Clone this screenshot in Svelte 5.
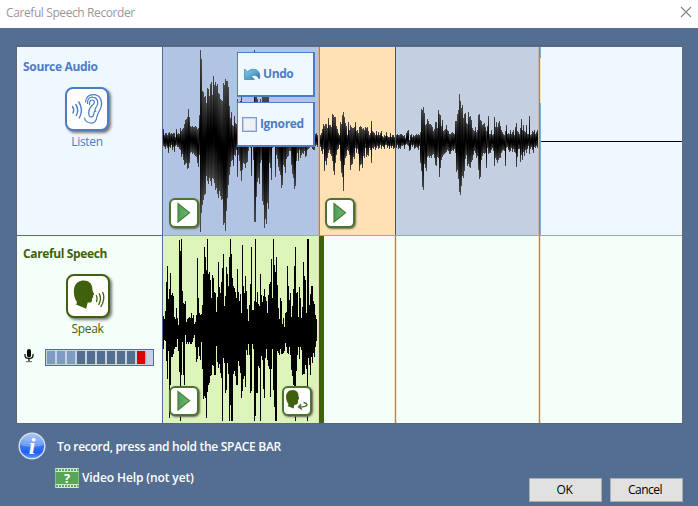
<script>
  // Peak values are stored in thirds of a pixel, one entry per pixel column.
  const blocks = [
    {
      x: 0, oyTop: -7, oyBottom: 88,
      top: [268,284,278,278,284,280,275,283,278,281,278,280,292,268,283,280,283,265,272,268,264,252,240,236,231,208,230,258,262,259,262,262,259,262,268,265,225,30,57,154,157,170,168,189,144,147,168,132,126,165,108,135,126,138,131,159,162,177,180,183,129,135,117,123,123,142,198,235,216,255,258,228,248,252,178,190,190,183,170,188,190,190,190,190,190,190,190,190,190,190,190,30,168,168,178,190,190,178,190,168,168,168,168,168,168,168,190,190,190,190,200,200,200,200,200,200,200,200,200,200,200,200,200,200,200,200,220,220,220,220,220,220,230,230,230,230,240,240,240,240,240,240,250,250,250,250,260,260,260,260,275,268,283,278,284,286],
      bottom: [33,36,42,33,39,54,36,39,30,45,36,51,33,30,36,36,42,45,66,57,75,90,87,84,102,100,84,54,51,57,54,60,63,66,84,96,60,290,234,210,195,180,177,124,138,147,130,138,152,130,132,144,165,159,177,189,167,183,195,192,270,265,288,228,190,150,120,96,78,75,93,60,63,45,125,60,78,108,137,105,84,87,100,84,80,48,36,40,122,30,75,260,262,186,140,129,146,84,75,198,210,280,252,267,204,222,84,100,135,40,36,36,125,60,72,96,108,120,160,150,90,96,114,72,66,63,48,48,90,117,129,162,152,78,54,78,45,69,60,54,57,48,66,63,45,42,40,36,36,42,45,45,33,30,36,30]
    },
    {
      x: 157, oyTop: 38, oyBottom: 38,
      top: [150,144,132,117,123,117,117,129,99,120,120,126,87,90,96,96,123,132,144,150,111,117,90,81,96,114,123,150,111,135,120,126,129,129,126,111,138,135,144,126,123,126,132,129,135,126,129,126,138,150,144,108,138,141,144,150,138,150,141,150,144,138,153,156,150,153,141,153,156,156,144,156,150,150,156,150],
      bottom: [186,198,207,192,258,228,240,219,204,195,207,213,228,258,270,234,210,195,192,180,228,264,276,318,240,219,213,195,198,210,255,240,237,216,222,189,204,192,207,258,240,237,249,213,219,189,216,210,213,189,195,234,189,192,186,195,189,183,192,189,180,192,183,186,192,180,180,189,183,192,183,189,183,192,189,180]
    },
    {
      x: 233, oyTop: 33, oyBottom: 33,
      top: [165,162,165,165,162,162,165,168,165,174,159,153,150,180,165,162,171,165,168,165,162,165,162,165,156,87,90,81,99,135,132,117,123,132,132,135,141,153,147,126,126,144,90,102,105,138,120,153,150,147,135,150,153,162,162,159,156,159,162,123,123,102,90,42,63,84,75,114,102,99,129,132,96,111,108,120,144,150,153,141,156,150,105,102,120,123,135,132,129,141,153,138,108,162,162,150,165,162,111,141,126,141,129,123,138,150,156,162,165,153,135,162,159,162,150,162,156,150,165,141,129,153,156,162,144,117,150,135,153,156,135,162,162,108,165,162,153,156,150,162,156,150,162],
      bottom: [204,195,207,204,207,198,198,195,207,195,192,195,198,213,210,195,201,195,207,204,201,204,210,198,249,273,321,330,252,264,273,231,228,234,228,234,225,222,234,255,258,231,234,291,264,240,231,225,222,219,216,210,213,222,222,213,210,213,207,219,276,270,297,336,345,318,288,294,273,237,225,258,252,261,264,246,240,225,213,219,234,228,270,297,291,240,228,219,222,219,264,204,222,219,219,210,204,213,258,234,240,249,240,234,234,219,213,210,213,258,204,201,210,216,213,204,216,207,216,219,261,231,207,207,246,225,240,216,228,210,219,207,198,222,207,201,210,219,201,204,198,204,207]
    }
  ];
  const speech = {
    x: 0, oyTop: -4, oyBottom: 89,
    top: [252,262,237,150,102,200,170,123,190,183,193,255,262,228,258,278,25,57,20,177,213,216,207,270,261,258,255,258,243,258,250,276,270,250,78,198,243,249,246,220,127,45,75,114,20,126,120,145,198,130,138,180,183,240,195,90,165,183,150,108,66,222,192,105,126,162,75,20,66,138,162,168,180,198,111,180,207,186,243,40,162,183,132,177,231,267,219,156,45,234,234,207,20,210,180,216,222,126,189,210,192,171,195,207,243,189,156,150,81,198,20,99,120,75,159,228,261,198,207,276,258,285,243,240,102,162,204,183,255,222,171,102,45,183,180,255,165,198,258,225,90,132,144,243,20,20,219,186,162,162,207,216,249,262,294],
    bottom: [72,45,48,108,162,78,278,180,95,96,87,72,66,66,42,78,141,288,150,51,150,180,30,57,51,57,51,57,57,51,39,30,66,111,102,66,93,105,51,132,222,213,219,278,201,180,174,153,150,120,123,150,150,63,111,129,117,144,159,288,99,114,204,195,114,147,288,240,288,288,147,138,153,180,180,108,123,144,219,198,162,153,186,75,90,57,90,204,198,57,72,288,273,204,204,123,129,288,93,105,192,219,99,72,105,123,132,216,132,72,195,246,288,288,78,84,90,72,87,87,84,78,54,66,84,87,66,90,135,153,180,189,288,138,90,66,102,66,75,150,147,147,120,132,288,99,120,150,96,114,84,96,66,48,15]
  };
  const toBars = (b) =>
    b.top.map((t, i) => {
      const y = Math.round(b.oyTop + t / 3);
      return { x: b.x + i, y, h: Math.round(b.oyBottom + b.bottom[i] / 3) - y };
    });
  const sourceBars = blocks.flatMap(toBars);
  const speechBars = toBars(speech);
  const meter = ['lo', 'lo', 'lo', 'mid', 'mid', 'mid', 'mid', 'mid', 'mid', 'peak'];
</script>

{#snippet play()}
  <svg width="30" height="30" viewBox="0 0 30 30">
    <path d="M9 5.5V24L20.5 14.8Z" fill="url(#leaf)" stroke="#47812f" stroke-width="1.2" />
  </svg>
{/snippet}

<div class="window">
  <header>
    <span class="title">Careful Speech Recorder</span>
    <svg class="close" width="12" height="12" viewBox="0 0 12 12"><path d="M1 1L11 11M11 1L1 11" stroke="#858585" stroke-width="1.1" /></svg>
  </header>
  <main>
    <div class="frame">
      <section class="row source">
        <div class="side">
          <h2>Source Audio</h2>
          <div class="tool">
            <button class="big" aria-label="Listen">
              <svg width="40" height="40" viewBox="0 0 40 40" fill="none" stroke="#4b7cc6" stroke-width="1.2" stroke-linecap="round">
                <path d="M5.5 17.5Q7.7 20.5 6 24M8.8 15.5Q12.2 20.5 9.3 26.5M11.8 13Q16.8 20.5 12.3 29" stroke-width="1.4" />
                <path d="M18.5 13C19 7.5 23 5.7 26.5 5.7C32.5 5.7 35.5 11 34.3 17C33.5 21.5 30.5 23.5 30 27.5C29.3 32 27.5 34.5 23.5 34C20.5 33.6 18 31.5 17.5 29" />
                <path d="M20.5 14.5C20 10 23 7.5 26 8.2C31 9 32 14 29.5 17.5C28.5 19 27.2 20.4 28.4 22.2C26 22 28 26 25.5 27.5C23 29 21.3 26.5 22 24.5M22.5 15.5C22 12 24 10.5 26 11.2C29 12.5 26.5 15.5 24.5 17C23 18.5 22 20 21.5 24" />
              </svg>
            </button>
            <span>Listen</span>
          </div>
        </div>
        <div class="track">
          <div class="seg s1"></div><div class="seg s2"></div><div class="seg s3"></div><div class="seg s4"></div>
          <svg class="wave" width="519" height="188" shape-rendering="crispEdges">
            <defs>
              <linearGradient id="ink" x2="0" y2="1">
                <stop offset="0" stop-color="#4a4a4a" /><stop offset=".22" stop-color="#222" /><stop offset=".45" stop-color="#000" />
                <stop offset=".58" stop-color="#000" /><stop offset=".8" stop-color="#222" /><stop offset="1" stop-color="#4a4a4a" />
              </linearGradient>
              <linearGradient id="leaf"><stop offset="0" stop-color="#4a9c56" /><stop offset="1" stop-color="#70b878" /></linearGradient>
            </defs>
            {#each sourceBars as b}
              <rect x={b.x} y={b.y} width="1" height={b.h} fill="url(#ink)" />
            {/each}
            <path d="M378 94.5H519" stroke="#000" />
            <path d="M155.5 0V188M375.5 0V188" stroke="#c8b5ac" />
            <path d="M156.500 0V188M376.500 0V188" stroke="#dc780f" />
            <path d="M232.500 0V188" stroke="#108010" />
            <path d="M377.500 0V188" stroke="#80a8dc" />
            <path d="M377.500 11V56" stroke="#ffe1b4" />
          </svg>
          <button class="small p1" aria-label="Play">{@render play()}</button>
          <button class="small p2" aria-label="Play">{@render play()}</button>
          <div class="menu">
            <button class="choice">
              <svg width="17" height="13" viewBox="0 0 17 13">
                <defs><linearGradient id="sky" x2="1" y2="1"><stop offset="0" stop-color="#8bd0e8" /><stop offset=".55" stop-color="#55a5cc" /><stop offset="1" stop-color="#285d96" /></linearGradient></defs>
                <path d="M.6 1V11.400H10.400L7.300 8.500C9.500 6.200 13.500 7 15.200 11C17 6.500 14.700 2 10.600 1.400C7.800 1 5.200 1.900 3.600 4Z" fill="url(#sky)" stroke="#4580ad" stroke-width=".8" />
              </svg>
              <span class="undo">Undo</span>
            </button>
            <button class="choice second">
              <i class="check"></i>
              <span class="ign">Ignored</span>
            </button>
          </div>
        </div>
      </section>
      <section class="row careful">
        <div class="side">
          <h2>Careful Speech</h2>
          <div class="tool">
            <button class="big" aria-label="Speak">
              <svg width="40" height="40" viewBox="0 0 40 40">
                <path d="M8 24.500C5.500 20 5.700 14 6.300 11.500C7.500 7 11.500 4.400 16 4.500C20.500 4.600 23.500 7.300 24.200 11C24.300 14 24.500 15 26.300 18.200L25 19.600L25.200 21.500L24 22.300C24.700 26.500 22.500 27 19.700 26.500L18.200 32.700L8 28.500C9.300 27 9 26 8 24.500Z" fill="#3f610d" />
                <path d="M28.300 19.500Q30 22.300 28.600 25.500M31.200 17.800Q34 22.300 30.800 28.500M34.800 16.500Q37.500 23 33 30.500" fill="none" stroke="#3f610d" stroke-width="1.3" stroke-linecap="round" />
              </svg>
            </button>
            <span>Speak</span>
          </div>
          <div class="level">
            <svg width="10" height="14" viewBox="0 0 10 14"><rect x="3" y="0" width="4" height="8.500" rx="2" /><path d="M1 5V6.500Q1 9.500 5 9.500Q9 9.500 9 6.500V5M5 9.500V12.500" fill="none" stroke="#000" stroke-width="1.200" /><path d="M2 12.700H8" stroke="#666" /></svg>
            <div class="meter">{#each meter as m}<i class={m}></i>{/each}</div>
          </div>
        </div>
        <div class="track">
          <div class="seg g1"></div>
          <svg class="wave" width="519" height="187" shape-rendering="crispEdges">
            <path d={speechBars.map((b) => `M${b.x} ${b.y}h1v${b.h}h-1z`).join('')} />
            <path d="M155.500 0V187" stroke="#ecd9bd" />
            <rect x="156" width="5" height="187" fill="#3f620e" />
            <path d="M231.500 0V187M233.500 0V187M375.500 0V187M377.500 0V187" stroke="#f5e3c6" />
            <path d="M232.500 0V187M376.500 0V187" stroke="#dc780f" />
          </svg>
          <button class="small p3" aria-label="Play">{@render play()}</button>
          <button class="small p4" aria-label="Speak again">
            <svg width="30" height="30" viewBox="0 0 30 30">
              <path d="M6 17.500C3.600 13 3.200 8.500 6 5.700C8 3.600 13 2.800 15.500 6.300C16.600 8 16.300 10 17.200 12.800L16 14C16.400 17.500 15.500 18.800 12.500 18.700L11.500 22.500L5.500 20C6.800 19 6.500 18.300 6 17.500Z" fill="#3f610d" />
              <path d="M21.500 16.500C25.500 16.800 26 19.300 23 20.400Q20.500 21.100 17 21M19 18.200L16.500 20.900L20 23.500" fill="none" stroke="#47702b" stroke-width="1.400" />
            </svg>
          </button>
        </div>
      </section>
    </div>
    <footer>
      <div class="notes">
        <div class="info">
          <svg width="28" height="28" viewBox="0 0 28 28">
            <defs><linearGradient id="orb" x2="0" y2="1"><stop offset="0" stop-color="#8eb8f8" /><stop offset=".5" stop-color="#3a78ed" /><stop offset=".75" stop-color="#215ff0" /><stop offset="1" stop-color="#55a3ff" /></linearGradient></defs>
            <circle cx="14" cy="14" r="12.800" fill="url(#orb)" stroke="#d8e0ef" stroke-width="1.400" />
            <path d="M2.500 13C2.500 -1 25.500 -1 25.500 13Q14 17 2.500 13Z" fill="#fff" opacity=".25" />
            <text x="14" y="21.500" text-anchor="middle" font-family="Liberation Serif, serif" font-size="24" font-weight="bold" font-style="italic" fill="#fff">i</text>
          </svg>
          <span class="rec">To record, press and hold the SPACE BAR</span>
        </div>
        <div class="video">
          <svg width="24" height="20" viewBox="0 0 24 20">
            <rect width="24" height="20" fill="#58a55a" />
            <path d="M0 .5H24M0 3.500H24M0 16.500H24M0 19.500H24" stroke="#cfe5d0" />
            <path d="M0 2H24M0 18H24" stroke="#e3f0e3" stroke-width="2" stroke-dasharray="1 2" />
            <path d="M.5 0V20M23.500 0V20" stroke="#9ccb9e" opacity=".7" />
            <text x="12" y="14.500" text-anchor="middle" font-family="Open Sans, sans-serif" font-size="13" font-weight="bold" fill="#fff">?</text>
          </svg>
          <span class="vid">Video Help (not yet)</span>
        </div>
      </div>
      <div class="actions">
        <button><span class="ok">OK</span></button>
        <button><span class="cancel">Cancel</span></button>
      </div>
    </footer>
  </main>
</div>

<style>
  :global(body) { margin: 0; }
  .window { width: 698px; height: 506px; display: flex; flex-direction: column; overflow: hidden; font: 12px/16px "Open Sans", "Noto Sans", sans-serif; background: #546e92; }
  .window * { box-sizing: border-box; }
  button { font: inherit; padding: 0; margin: 0; color: inherit; }
  svg { display: block; }
  header { height: 28px; flex: none; background: #fff; display: flex; justify-content: space-between; align-items: flex-start; padding: 5px 6px 0 6px; color: #999; }
  .title { letter-spacing: -.4px; }
  .close { margin-top: 1px; }
  main { flex: 1; display: flex; flex-direction: column; padding: 17px 0 0 16px; }
  .frame { width: 667px; height: 379px; border: 1px solid #5c6575; display: flex; flex-direction: column; padding-top: 1px; border-right-color: #64697a; }
  .row { display: flex; }
  .source { height: 189px; background: #f0f8ff; border-bottom: 1px solid #8db1a2; }
  .careful { height: 187px; background: #f5fffa; }
  .side { width: 146px; flex: none; border-right: 1px solid #546e9a; padding: 12px 0 0 6px; }
  .source .side { color: #4b7cc6; border-bottom: 1px solid #546e9a; height: 189px; }
  .careful .side { color: #3f610d; padding-top: 10px; }
  h2 { margin: 0; font-size: 12px; line-height: 16px; font-weight: 700; }
  .source h2 { letter-spacing: -.33px; }
  .careful h2 { letter-spacing: -.36px; }
  .tool { width: 128px; display: flex; flex-direction: column; align-items: center; padding-top: 12px; }
  .careful .tool { width: 129px; }
  .big { width: 44px; height: 44px; border: 2px solid #4b7cc6; border-radius: 8px; background: #fff; box-shadow: 2px 2px 3px #777; }
  .careful .big { border-color: #3f610d; }
  .tool span { margin-top: 3px; letter-spacing: -.3px; }
  .level { display: flex; gap: 11px; padding-left: 1px; margin-top: 12px; }
  .meter { width: 109px; height: 17px; border: 1px solid #546e9a; background: #c5d1e3; padding: 1px; display: flex; gap: 2px; }
  .meter i { width: 8px; height: 13px; background: #546e92; flex: none; }
  .meter .lo { background: #7d9bc5; }
  .meter .peak { background: #dc0000; box-shadow: 2px 0 0 -0.5px #b4b4b4; }
  .track { position: relative; width: 519px; display: flex; }
  .s1 { width: 157px; background: #b1c4e4; }
  .s2 { width: 76px; background: #ffe1b4; }
  .s3 { width: 144px; background: #c4d0e2; }
  .s4 { flex: 1; }
  .g1 { width: 156px; background: #dcf4ba; }
  .wave { position: absolute; left: 0; top: 0; }
  .small { position: absolute; width: 30px; height: 30px; border: 2px solid #4e7331; border-radius: 6px; background: #fff; box-shadow: 1px 1px 2px #665; }
  .small svg { margin: -2px; }
  .p1 { left: 6px; top: 151px; }
  .p2 { left: 162px; top: 151px; }
  .p3 { left: 6px; top: 150px; }
  .p4 { left: 119px; top: 150px; }
  .menu { position: absolute; left: 74px; top: 5px; display: flex; flex-direction: column; gap: 5px; }
  .choice { width: 78px; height: 45px; border: 1px solid #4b7cc6; border-width: 1px 2px 2px 1px; background: #f0f8ff; display: flex; align-items: center; padding-left: 6px; gap: 2px; color: #4b7cc6; font-weight: 700; }
  .choice.second { padding-left: 4px; gap: 3px; }
  .choice span { padding-bottom: 1px; }
  .check { width: 15px; height: 15px; border: 1px solid #7f9acb; background: #eef0f5; box-shadow: inset 0 0 0 1px #c4d0e6; }
  .undo { letter-spacing: -.4px; }
  .ign { letter-spacing: -.35px; }
  footer { display: flex; justify-content: space-between; color: #fff; font-weight: 600; }
  .notes { padding: 8px 0 0 2px; }
  .info { display: flex; align-items: center; gap: 11px; }
  .info span { padding-top: 2px; letter-spacing: -.29px; }
  .video { display: flex; align-items: center; gap: 3px; padding-left: 37px; margin-top: 8px; }
  .vid { letter-spacing: -.11px; }
  .actions { display: flex; gap: 8px; padding: 54px 15px 0 0; }
  .actions button { width: 73px; height: 24px; background: #e1e1e1; border: 1px solid #adadad; color: #000; font-weight: 400; line-height: 20px; }
  .ok { letter-spacing: -.3px; padding-right: 2px; }
  .cancel { letter-spacing: -.5px; padding-right: 3px; }
</style>
